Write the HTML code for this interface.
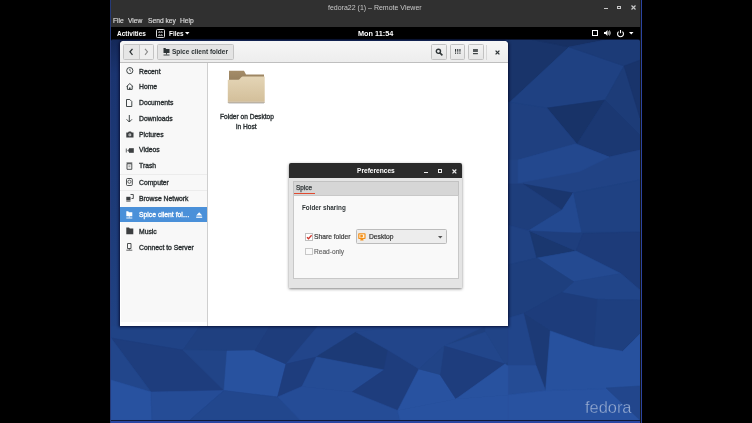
<!DOCTYPE html>
<html><head><meta charset="utf-8">
<style>
.t,.sb{will-change:transform}
html,body{margin:0;padding:0}
body{width:752px;height:423px;background:#000;overflow:hidden;position:relative;font-family:"Liberation Sans",sans-serif;}
.a{position:absolute}
.t{position:absolute;white-space:nowrap;line-height:1}
.sb{position:absolute;left:138.5px;font-size:6.8px;color:#262a2c;white-space:nowrap;line-height:1;-webkit-text-stroke:0.35px #2e3436}
svg{position:absolute;overflow:visible}
</style></head><body>

<!-- remote viewer frame -->
<div class="a" style="left:110px;top:0;width:1px;height:423px;background:#263a78"></div>
<div class="a" style="left:641px;top:0;width:1px;height:423px;background:#2b44a0"></div>
<div class="a" style="left:640px;top:0;width:1px;height:423px;background:#141414"></div>
<div class="a" style="left:111px;top:0;width:529px;height:27px;background:#303030"></div>
<div class="t" style="left:328px;top:3.5px;font-size:7px;color:#c8c8c8">fedora22 (1) – Remote Viewer</div>
<div class="t" style="left:113px;top:18px;font-size:6.7px;color:#dcdcdc;-webkit-text-stroke:0.15px #dcdcdc">File</div>
<div class="t" style="left:128px;top:18px;font-size:6.7px;color:#dcdcdc;-webkit-text-stroke:0.15px #dcdcdc">View</div>
<div class="t" style="left:148px;top:18px;font-size:6.7px;color:#dcdcdc;-webkit-text-stroke:0.15px #dcdcdc">Send key</div>
<div class="t" style="left:180px;top:18px;font-size:6.7px;color:#dcdcdc;-webkit-text-stroke:0.15px #dcdcdc">Help</div>
<!-- title buttons -->
<div class="a" style="left:603.5px;top:8px;width:4px;height:1.2px;background:#c8c8c8"></div>
<div class="a" style="left:617px;top:5.5px;width:4px;height:3.5px;border:1px solid #c8c8c8;border-top-width:1.5px;box-sizing:border-box"></div>
<svg style="left:631px;top:5px" width="5" height="5"><path d="M0.5 0.5L4.5 4.5M4.5 0.5L0.5 4.5" stroke="#c8c8c8" stroke-width="1.2"/></svg>

<!-- gnome top bar -->
<div class="a" style="left:111px;top:27px;width:529px;height:12px;background:#000"></div>
<div class="t" style="left:116.5px;top:30.5px;font-size:6.5px;color:#fff;font-weight:bold">Activities</div>
<div class="a" style="left:156px;top:28.5px;width:9px;height:9.5px;border:1px solid #ddd;border-radius:1.5px;box-sizing:border-box"></div><svg style="left:156px;top:28.5px" width="9" height="9.5"><path d="M2 3.2H7M2 6.3H7" stroke="#ccc" stroke-width="0.8"/><path d="M3.5 2V3.2M5.5 2V3.2M3.5 5.1V6.3M5.5 5.1V6.3" stroke="#ccc" stroke-width="0.6"/></svg>
<div class="t" style="left:168.5px;top:30.8px;font-size:6.4px;color:#fff;font-weight:bold">Files</div>
<svg style="left:185px;top:32px" width="5" height="3"><path d="M0 0H4.5L2.25 2.5Z" fill="#fff"/></svg>
<div class="t" style="left:358px;top:30px;font-size:7.3px;color:#fff;font-weight:bold">Mon 11:54</div>
<div class="a" style="left:591.5px;top:30px;width:6px;height:6px;border:1.2px solid #fff;box-sizing:border-box"></div>
<svg style="left:604px;top:30px" width="7" height="6"><path d="M0 2H1.5L3.5 0V6L1.5 4H0Z" fill="#fff"/><path d="M4.5 1.5Q5.5 3 4.5 4.5M5.5 0.5Q7 3 5.5 5.5" stroke="#fff" stroke-width="0.8" fill="none"/></svg>
<svg style="left:617px;top:29.5px" width="7" height="7"><path d="M1.6 1.6A2.95 2.95 0 1 0 5.4 1.6" stroke="#fff" stroke-width="1.1" fill="none"/><path d="M3.5 0V3.2" stroke="#fff" stroke-width="1.1"/></svg>
<svg style="left:629px;top:32px" width="5" height="3"><path d="M0 0H4.5L2.25 2.5Z" fill="#fff"/></svg>

<!-- desktop -->
<div class="a" id="desk" style="left:111px;top:39px;width:529px;height:381px;background:#1f407f;overflow:hidden;border-radius:4px 4px 0 0"><svg style="left:0;top:0" width="529" height="381" viewBox="111 39 529 381"><defs><linearGradient id="lg" x1="0" y1="0" x2="0" y2="1"><stop offset="0" stop-color="#142858"/><stop offset="0.12" stop-color="#1a3470"/><stop offset="0.6" stop-color="#1d3b78"/><stop offset="1" stop-color="#204284"/></linearGradient></defs><rect x="111" y="39" width="529" height="381" fill="#1f407f"/><rect x="111" y="39" width="12" height="290" fill="url(#lg)"/><polygon points="508,39 530,39 569,47 510,102 508,102" fill="#19346a" stroke="#19346a" stroke-width="0.6"/><polygon points="530,39 610,39 569,47" fill="#173063" stroke="#173063" stroke-width="0.6"/><polygon points="569,47 624,66 605,100 547,108 510,102" fill="#1f4182" stroke="#1f4182" stroke-width="0.6"/><polygon points="610,39 640,39 640,66 624,66 569,47" fill="#1c3b77" stroke="#1c3b77" stroke-width="0.6"/><polygon points="624,66 640,66 640,135 605,100" fill="#1d3c78" stroke="#1d3c78" stroke-width="0.6"/><polygon points="547,108 605,100 577,144" fill="#183368" stroke="#183368" stroke-width="0.6"/><polygon points="605,100 640,135 640,150 609,157 577,144" fill="#1b3872" stroke="#1b3872" stroke-width="0.6"/><polygon points="508,102 547,108 577,144 518,160 508,160" fill="#1f4080" stroke="#1f4080" stroke-width="0.6"/><polygon points="508,160 518,160 577,144 609,157 640,150 640,180 573,193 523,184 508,184" fill="#214385" stroke="#214385" stroke-width="0.6"/><polygon points="518,160 575,144 609,157 579.5,171.5 518,183" fill="#23488e" stroke="#23488e" stroke-width="0.6"/><polygon points="624,66 640,60 640,118" fill="#19346b" stroke="#19346b" stroke-width="0.6"/><polygon points="523,184 573,193 562,210" fill="#1a366e" stroke="#1a366e" stroke-width="0.6"/><polygon points="508,184 523,184 562,210 528,231 508,225" fill="#1e3e7c" stroke="#1e3e7c" stroke-width="0.6"/><polygon points="573,193 640,180 640,232 581,232" fill="#1f4182" stroke="#1f4182" stroke-width="0.6"/><polygon points="562,210 573,193 581,232 542,238 528,231" fill="#234990" stroke="#234990" stroke-width="0.6"/><polygon points="508,225 529.8,230.9 536.9,258.1 508,265" fill="#204283" stroke="#204283" stroke-width="0.6"/><polygon points="529.8,230.9 576,251 536.9,258.1" fill="#1a376f" stroke="#1a376f" stroke-width="0.6"/><polygon points="529.8,230.9 583,233.3 576,251" fill="#1e3e7d" stroke="#1e3e7d" stroke-width="0.6"/><polygon points="583,233.3 640,232 640,290 620.9,273.5 576,251" fill="#1d3b79" stroke="#1d3b79" stroke-width="0.6"/><polygon points="536.9,258.1 576,251 620.9,273.5 573.6,281.7" fill="#244a91" stroke="#244a91" stroke-width="0.6"/><polygon points="573.6,281.7 620.9,273.5 640,290 640,300 597.5,299.4 561.7,292.4" fill="#214589" stroke="#214589" stroke-width="0.6"/><polygon points="508,265 536.9,258.1 573.6,281.7 561.7,292.4 523.6,313.6 508,318" fill="#1e3f7e" stroke="#1e3f7e" stroke-width="0.6"/><polygon points="523.6,313.6 561.7,292.4 597.5,299.4 594.4,346.6 550.3,330.9" fill="#1d3c7b" stroke="#1d3c7b" stroke-width="0.6"/><polygon points="597.5,299.4 640,300 640,334 622.7,351.3 594.4,346.6" fill="#1e3f7f" stroke="#1e3f7f" stroke-width="0.6"/><polygon points="523.6,313.6 550.3,330.9 545.6,390.7 536,365.5" fill="#1c3a76" stroke="#1c3a76" stroke-width="0.6"/><polygon points="508,318 523.6,313.6 536,365.5 508,365.5" fill="#21458a" stroke="#21458a" stroke-width="0.6"/><polygon points="550.3,330.9 594.4,346.6 622.7,351.3 640,334 640,388 545.6,390.7" fill="#27519e" stroke="#27519e" stroke-width="0.6"/><polygon points="508,365.5 536,365.5 545.6,390.7 508,395" fill="#254c95" stroke="#254c95" stroke-width="0.6"/><polygon points="508,395 545.6,390.7 640,388 640,420 508,420" fill="#2852a0" stroke="#2852a0" stroke-width="0.6"/><polygon points="606,388 640,386 640,420" fill="#22468c" stroke="#22468c" stroke-width="0.6"/><polygon points="111,326 200,326 183,350 114,338.6 111,338" fill="#204386" stroke="#204386" stroke-width="0.6"/><polygon points="200,326 270,326 255,350.6 183,350" fill="#1f4080" stroke="#1f4080" stroke-width="0.6"/><polygon points="111,338 183,350 224,390.5 151,392" fill="#1e3d7d" stroke="#1e3d7d" stroke-width="0.6"/><polygon points="111,338 151,392 111,380" fill="#22468b" stroke="#22468b" stroke-width="0.6"/><polygon points="183,350 227,351 224,390.5" fill="#214487" stroke="#214487" stroke-width="0.6"/><polygon points="227,351 255,350.6 286,364 277.6,397 224,390.5" fill="#28529f" stroke="#28529f" stroke-width="0.6"/><polygon points="111,380 151,392 152,420 111,420" fill="#2852a0" stroke="#2852a0" stroke-width="0.6"/><polygon points="151,392 224,390.5 190,420 152,420" fill="#254c96" stroke="#254c96" stroke-width="0.6"/><polygon points="224,390.5 277.6,397 300,420 190,420" fill="#22478d" stroke="#22478d" stroke-width="0.6"/><polygon points="270,326 318,326 286,364 255,350.6" fill="#1e3d7c" stroke="#1e3d7c" stroke-width="0.6"/><polygon points="318,326 404,326 356,332 318,355 316.5,357 286,364" fill="#22458a" stroke="#22458a" stroke-width="0.6"/><polygon points="316.5,357 356,332 388,350 384,370" fill="#1c3a76" stroke="#1c3a76" stroke-width="0.6"/><polygon points="286,364 316.5,357 302,386.5 277.6,397" fill="#1e3d7d" stroke="#1e3d7d" stroke-width="0.6"/><polygon points="316.5,357 384,370 352,392 302,386.5" fill="#254c95" stroke="#254c95" stroke-width="0.6"/><polygon points="384,370 388,350 419,369 397.7,410.4 352,392" fill="#1e3d7d" stroke="#1e3d7d" stroke-width="0.6"/><polygon points="419,369 440,374.5 456,399 397.7,410.4" fill="#2852a0" stroke="#2852a0" stroke-width="0.6"/><polygon points="404,326 485,326 444,346 419,369 388,350 356,332" fill="#22458a" stroke="#22458a" stroke-width="0.6"/><polygon points="444,346 485.7,332 505,364" fill="#22468b" stroke="#22468b" stroke-width="0.6"/><polygon points="485,326 508,326 508,362 505,364 485.7,332" fill="#214487" stroke="#214487" stroke-width="0.6"/><polygon points="440,374.5 444,346 505,364 456,399" fill="#1e3d7d" stroke="#1e3d7d" stroke-width="0.6"/><polygon points="419,369 444,346 440,374.5" fill="#214487" stroke="#214487" stroke-width="0.6"/><polygon points="277.6,397 302,386.5 352,392 397.7,410.4 400,420 300,420" fill="#254c96" stroke="#254c96" stroke-width="0.6"/><polygon points="397.7,410.4 456,399 508,395 508,420 400,420" fill="#2852a0" stroke="#2852a0" stroke-width="0.6"/><polygon points="456,399 505,364 508,366 508,395" fill="#28529f" stroke="#28529f" stroke-width="0.6"/></svg></div>
<div class="a" style="left:111px;top:420px;width:529px;height:1px;background:#101a3a"></div>
<div class="a" style="left:111px;top:39px;width:529px;height:1px;background:rgba(5,10,30,.7)"></div>
<div class="a" style="left:111px;top:421px;width:529px;height:2px;background:#2a45a0"></div>

<!-- fedora logo -->
<div class="t" style="left:585px;top:399px;font-size:16.4px;color:#9aaed3;-webkit-text-stroke:0.3px #27509c">fedora</div>

<!-- files window -->
<div class="a" style="left:120px;top:41px;width:388px;height:285px;background:#fff;border-radius:4px 4px 0 0;box-shadow:0 0 3px 1px rgba(0,0,30,.75)"></div>
<div class="a" style="left:120px;top:41px;width:388px;height:21px;background:linear-gradient(#f6f6f6,#ededed);border-bottom:1px solid #bfbfbf;border-radius:4px 4px 0 0"></div>
<div class="a" style="left:121px;top:63px;width:86px;height:258.5px;background:#f8f8f8"></div><div class="a" style="left:207px;top:63px;width:1px;height:263px;background:#cfcfcf"></div>

<!-- header buttons -->
<div class="a" style="left:123px;top:44px;width:31px;height:15.5px;border:1px solid #c4c4c4;border-radius:1.5px;box-sizing:border-box;background:#efefef"></div>
<div class="a" style="left:124px;top:45px;width:14.5px;height:13.5px;background:#e6e6e6"></div>
<div class="a" style="left:138.5px;top:44.5px;width:1px;height:14.5px;background:#c8c8c8"></div>
<svg style="left:128.5px;top:48px" width="5" height="8"><path d="M3.5 0.8L1 3.8L3.5 6.8" stroke="#2e3436" stroke-width="1.3" fill="none"/></svg>
<svg style="left:143.5px;top:48px" width="5" height="8"><path d="M1 0.8L3.5 3.8L1 6.8" stroke="#8a8a8a" stroke-width="1.1" fill="none"/></svg>

<div class="a" style="left:157px;top:44px;width:77px;height:15.5px;border:1px solid #c4c4c4;border-radius:1.5px;box-sizing:border-box;background:#e4e4e4"></div>
<svg style="left:162.5px;top:48px" width="7" height="8"><path d="M0.5 0H2.5L3 1H6.5V5H0.5Z" fill="#2e3436"/><path d="M3.5 5V6.5M0.5 7H6.5" stroke="#2e3436" stroke-width="0.9"/></svg>
<div class="t" style="left:172px;top:48.5px;font-size:6.5px;color:#2e3436;font-weight:bold">Spice client folder</div>

<div class="a" style="left:431px;top:44px;width:15.5px;height:15.5px;border:1px solid #c2c2c2;border-radius:1.5px;box-sizing:border-box;background:linear-gradient(#f2f2f2,#e6e6e6)"></div>
<svg style="left:434.5px;top:47.5px" width="9" height="9"><circle cx="3.4" cy="3.3" r="2.1" stroke="#2e3436" stroke-width="1.4" fill="none"/><path d="M4.9 4.9L7.4 7.4" stroke="#2e3436" stroke-width="1.5"/></svg>
<div class="a" style="left:449.5px;top:44px;width:15.5px;height:15.5px;border:1px solid #c2c2c2;border-radius:1.5px;box-sizing:border-box;background:linear-gradient(#f2f2f2,#e6e6e6)"></div>
<svg style="left:454.7px;top:49.2px" width="6" height="6"><g fill="#2e3436"><rect x="0" y="0" width="1.1" height="2.7"/><rect x="0" y="3.5" width="1.1" height="1.3"/><rect x="2.2" y="0" width="1.1" height="2.7"/><rect x="2.2" y="3.5" width="1.1" height="1.3"/><rect x="4.4" y="0" width="1.1" height="2.7"/><rect x="4.4" y="3.5" width="1.1" height="1.3"/></g></svg>
<div class="a" style="left:468px;top:44px;width:15.5px;height:15.5px;border:1px solid #c2c2c2;border-radius:1.5px;box-sizing:border-box;background:linear-gradient(#f2f2f2,#e6e6e6)"></div>
<svg style="left:473.2px;top:49.2px" width="6" height="6"><g fill="#2e3436"><rect x="0" y="0" width="4.9" height="0.8"/><rect x="0" y="1.1" width="4.9" height="0.8"/><rect x="0" y="2.2" width="4.9" height="0.8"/><rect x="0" y="4.1" width="4.9" height="1.1"/></g></svg>
<div class="a" style="left:486px;top:44.5px;width:1px;height:15px;background:#d8d8d8"></div>
<svg style="left:495px;top:49.5px" width="5" height="5"><path d="M0.6 0.6L4.4 4.4M4.4 0.6L0.6 4.4" stroke="#2e3436" stroke-width="1.3"/></svg>

<!-- sidebar -->
<div class="a" style="left:120px;top:173.5px;width:87px;height:1px;background:#ececec"></div>
<div class="a" style="left:120px;top:190px;width:87px;height:1px;background:#ececec"></div>
<div class="a" style="left:120px;top:207px;width:87px;height:15px;background:#4a90d9"></div>

<svg style="left:125.5px;top:67px" width="8" height="8"><circle cx="3.8" cy="3.6" r="3.1" stroke="#2e3436" stroke-width="0.9" fill="none"/><path d="M3.8 1.8V3.6L5 4.4" stroke="#2e3436" stroke-width="0.7" fill="none"/></svg>
<div class="sb" style="top:68.6px">Recent</div>
<svg style="left:125.5px;top:83px" width="8" height="7"><path d="M0.5 3.6L3.8 0.6L7.1 3.6M1.4 3V6.4H6.2V3" stroke="#2e3436" stroke-width="0.9" fill="none"/><path d="M3.1 6.4V4.4H4.5V6.4Z" fill="#2e3436"/></svg>
<div class="sb" style="top:84.0px">Home</div>
<svg style="left:126px;top:98.5px" width="7" height="8"><path d="M0.5 0.5H3.8L5.8 2.5V7.5H0.5Z" stroke="#2e3436" stroke-width="0.9" fill="none"/></svg>
<div class="sb" style="top:100.2px">Documents</div>
<svg style="left:126px;top:114.5px" width="7" height="8"><path d="M3.3 0V7M0.6 4.3L3.3 7L6 4.3" stroke="#2e3436" stroke-width="0.9" fill="none"/></svg>
<div class="sb" style="top:115.8px">Downloads</div>
<svg style="left:125.5px;top:130.5px" width="8" height="7"><path d="M0.3 1.5H2L2.8 0.5H5L5.8 1.5H7.5V6.5H0.3Z" fill="#3c3f41"/><circle cx="3.9" cy="3.9" r="1.4" fill="#f0f0f0"/><circle cx="3.9" cy="3.9" r="0.7" fill="#3c3f41"/></svg>
<div class="sb" style="top:131.6px">Pictures</div>
<svg style="left:125.5px;top:146.5px" width="8" height="7"><path d="M0.3 1.5V5.5" stroke="#3c3f41" stroke-width="0.8"/><path d="M1.3 3.5L2.8 2V5Z" fill="#3c3f41"/><rect x="3" y="1.2" width="4.8" height="4.6" fill="#3c3f41"/></svg>
<div class="sb" style="top:147.3px">Videos</div>
<svg style="left:126px;top:161.5px" width="7" height="8"><path d="M0.5 1H6.3" stroke="#3c3f41" stroke-width="1"/><path d="M1 1.8H5.8V7.3H1Z" stroke="#3c3f41" stroke-width="0.9" fill="none"/><rect x="2.4" y="3.3" width="2" height="2" fill="#aaa"/></svg>
<div class="sb" style="top:163.1px">Trash</div>
<svg style="left:126px;top:178px" width="7" height="8"><rect x="0.5" y="0.5" width="5.8" height="7" rx="1" stroke="#3c3f41" stroke-width="0.9" fill="none"/><circle cx="3.4" cy="3.7" r="1.6" stroke="#3c3f41" stroke-width="0.8" fill="none"/></svg>
<div class="sb" style="top:179.6px">Computer</div>
<svg style="left:125.5px;top:194px" width="8" height="8"><rect x="0.3" y="2.8" width="4.2" height="3.6" fill="#3c3f41"/><path d="M0.3 7.2H4.5" stroke="#3c3f41" stroke-width="0.8"/><path d="M4.5 0.5H7.3V4.5H5.5" stroke="#3c3f41" stroke-width="0.9" fill="none"/></svg>
<div class="sb" style="top:196.1px">Browse Network</div>
<svg style="left:126px;top:210.5px" width="7" height="8"><path d="M0.3 0.3H2.3L2.8 1.3H6.3V5.3H0.3Z" fill="#fff"/><path d="M3.3 5.3V6.5M0.3 7H6.3" stroke="#fff" stroke-width="0.9"/></svg>
<div class="sb" style="top:212.3px;color:#fff;-webkit-text-stroke:0.3px #fff">Spice client fol…</div>
<svg style="left:195.5px;top:211.5px" width="7" height="7"><path d="M3.2 0.3L6.2 3.5H0.2Z" fill="#fff"/><rect x="0.2" y="4.6" width="6" height="1.2" fill="#fff"/></svg>
<svg style="left:125.5px;top:227px" width="8" height="8"><path d="M0.3 0.5H3L3.8 1.5H7.3V7.3H0.3Z" fill="#3c3f41"/></svg>
<div class="sb" style="top:228.9px">Music</div>
<svg style="left:126px;top:243px" width="7" height="8"><path d="M1.5 0.5H5V5.5H1.5Z" stroke="#3c3f41" stroke-width="0.9" fill="none"/><path d="M3.3 5.5V6.8M0.3 7.2H6.3" stroke="#3c3f41" stroke-width="0.8"/></svg>
<div class="sb" style="top:244.6px">Connect to Server</div>

<!-- folder icon -->
<svg style="left:227px;top:70px" width="40" height="35">
  <defs>
    <linearGradient id="fg" x1="0" y1="0" x2="0" y2="1"><stop offset="0" stop-color="#e4d5b6"/><stop offset="1" stop-color="#d3bf9a"/></linearGradient>
    <linearGradient id="bg2" x1="0" y1="0" x2="0" y2="1"><stop offset="0" stop-color="#a48c68"/><stop offset="1" stop-color="#7c674a"/></linearGradient>
  </defs>
  <path d="M2 0.8H17L19 4.6H37V30H2Z" fill="url(#bg2)"/>
  <path d="M0.8 9.7H11.5Q12.5 9.7 13.5 8Q14.5 6.4 15.5 6.4H37.7V31.8H0.8Z" fill="url(#fg)"/>
  <rect x="0.8" y="31.8" width="36.9" height="1.2" fill="#8f7f66" opacity="0.6"/><rect x="1.5" y="33" width="35.5" height="1" fill="#999" opacity="0.35"/>
</svg>
<div class="t" style="left:219.5px;top:113.5px;font-size:6.6px;color:#2e3436;-webkit-text-stroke:0.35px #2e3436">Folder on Desktop</div>
<div class="t" style="left:236px;top:123.5px;font-size:6.6px;color:#2e3436;-webkit-text-stroke:0.35px #2e3436">in Host</div>

<!-- preferences dialog -->
<div class="a" style="left:289px;top:163px;width:173px;height:125px;background:#e4e4e4;box-shadow:0 1px 3px rgba(0,0,0,.5);border-radius:2px 2px 0 0"></div>
<div class="a" style="left:289px;top:163px;width:173px;height:15px;background:#2b2b2b;border-radius:2px 2px 0 0"></div>
<div class="t" style="left:356.5px;top:167.8px;font-size:6.6px;color:#fff;font-weight:bold">Preferences</div>
<div class="a" style="left:424px;top:171.5px;width:4px;height:1.3px;background:#eee"></div>
<div class="a" style="left:438.2px;top:168.5px;width:4.2px;height:4px;border:1px solid #eee;border-top-width:1.5px;box-sizing:border-box"></div>
<svg style="left:452px;top:168.8px" width="5" height="5"><path d="M0.5 0.5L4.3 4.3M4.3 0.5L0.5 4.3" stroke="#eee" stroke-width="1.2"/></svg>

<div class="a" style="left:293px;top:181px;width:165.5px;height:14px;background:#d6d6d6;border:1px solid #c2c2c2;border-bottom:none;box-sizing:border-box"></div>
<div class="t" style="left:296px;top:185px;font-size:6.4px;color:#2e3436;-webkit-text-stroke:0.25px #2e3436">Spice</div>
<div class="a" style="left:293.5px;top:193px;width:21px;height:1px;background:#e04a30"></div>
<div class="a" style="left:293px;top:195px;width:165.5px;height:83.5px;background:#f9f9f9;border:1px solid #c8c8c8;box-sizing:border-box"></div>

<div class="t" style="left:301.5px;top:204.5px;font-size:6.3px;color:#2e3436;font-weight:bold">Folder sharing</div>
<div class="a" style="left:305px;top:233px;width:7.5px;height:7.5px;border:1px solid #c0c0c0;background:#fff;box-sizing:border-box"></div>
<svg style="left:305.5px;top:233.5px" width="7" height="7"><path d="M1 3.2L2.5 4.8L5.6 1.3" stroke="#d0342c" stroke-width="1.3" fill="none"/></svg>
<div class="t" style="left:314.2px;top:234.3px;font-size:6.7px;color:#3c3c3c;-webkit-text-stroke:0.2px #3c3c3c">Share folder</div>
<div class="a" style="left:305px;top:247.5px;width:7.5px;height:7.5px;border:1px solid #c8c8c8;background:#fafafa;box-sizing:border-box"></div>
<div class="t" style="left:314.2px;top:249px;font-size:6.6px;color:#666;-webkit-text-stroke:0.15px #666">Read-only</div>

<div class="a" style="left:356px;top:229px;width:91px;height:15px;border:1px solid #bcbcbc;border-radius:1.5px;background:#ededed;box-sizing:border-box"></div>
<svg style="left:358px;top:233px" width="8" height="8"><rect x="0.2" y="0.2" width="7.4" height="5.8" rx="0.8" fill="#f39019"/><rect x="1.4" y="1.3" width="5" height="3.6" fill="#fff3e0"/><path d="M2.3 1.8H3.8Q5 1.8 5 3.1Q5 4.4 3.8 4.4H2.3Z" fill="#f39019"/><path d="M2.6 6.1H5.2L5.6 7.6H2.2Z" fill="#f39019"/></svg>
<div class="t" style="left:368.5px;top:233.6px;font-size:6.7px;color:#333;-webkit-text-stroke:0.2px #333">Desktop</div>
<svg style="left:438px;top:235.5px" width="5" height="3"><path d="M0 0H4.5L2.25 2.5Z" fill="#555"/></svg>

</body></html>
